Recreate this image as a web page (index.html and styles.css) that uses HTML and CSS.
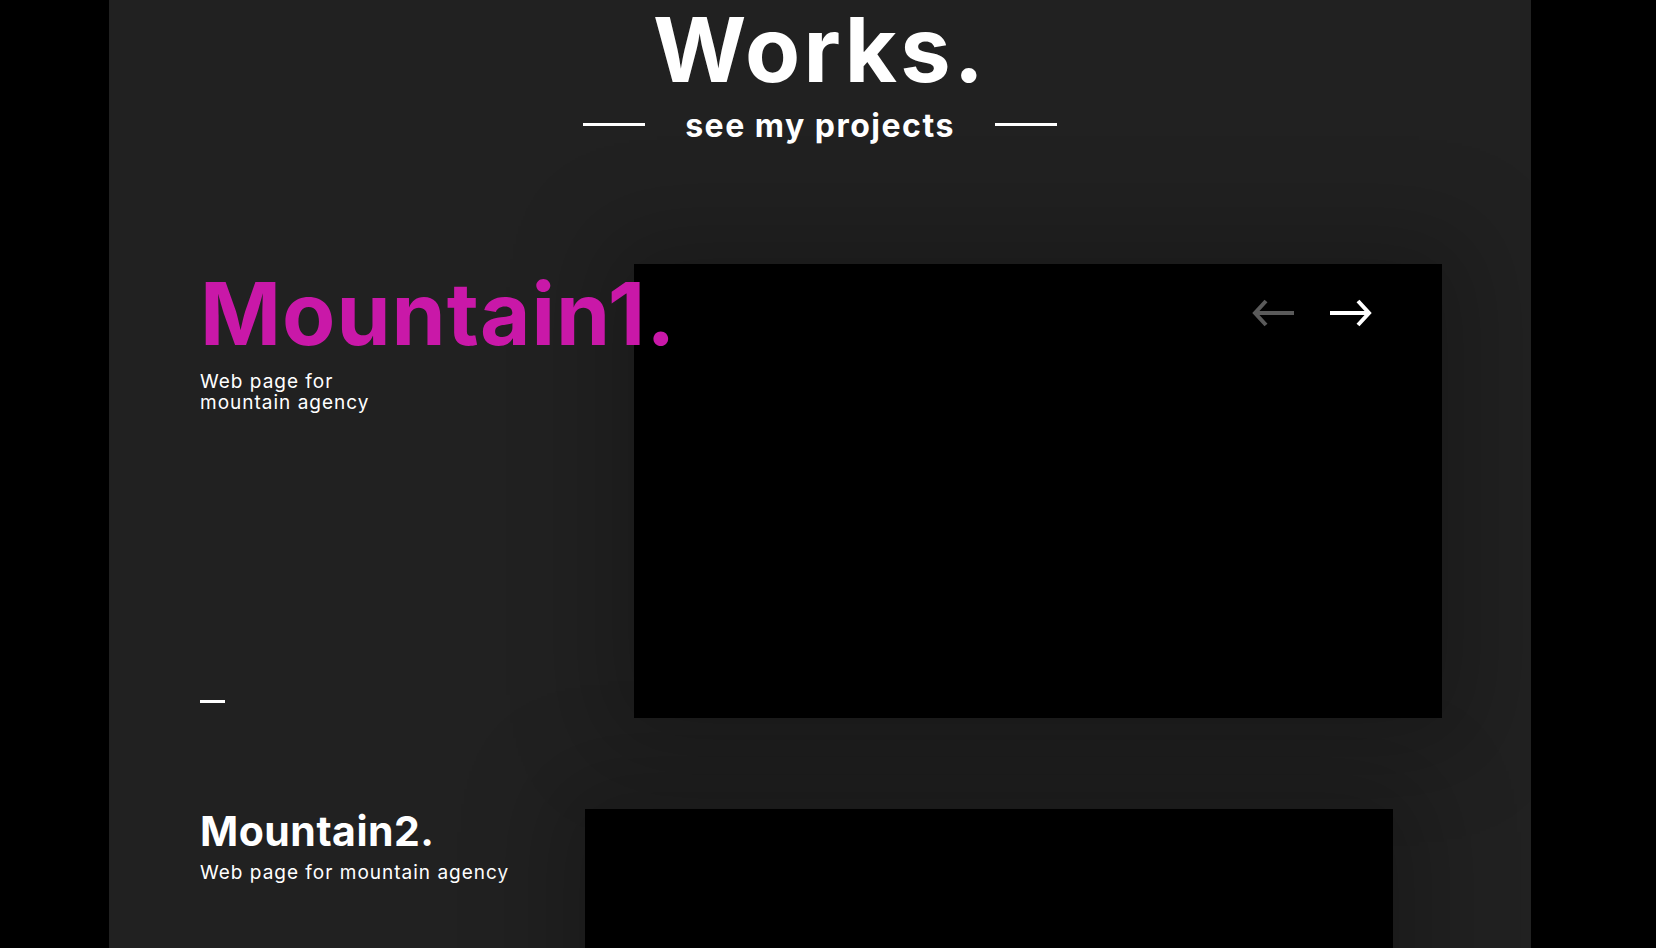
FILE: index.html
```html
<!DOCTYPE html>
<html>
<head>
<meta charset="utf-8">
<link rel="stylesheet" href="styles.css">
</head>
<body>
<main class="page">
  <header class="works-head">
    <h1 class="works-title">Works.</h1>
    <div class="works-sub">
      <span class="rule"></span>
      <span class="sub-text">see my projects</span>
      <span class="rule"></span>
    </div>
  </header>

  <section class="project project-one">
    <div class="project-info">
      <div>
        <h2 class="project-title accent">Mountain1.</h2>
        <p class="project-desc">Web page for<br>mountain agency</p>
      </div>
      <span class="dash"></span>
    </div>
    <div class="project-shot">
      <div class="arrows">
        <svg class="arrow arrow-prev" width="44" height="28" viewBox="0 0 44 28"><path d="M42 14H3M14 2L3 14l11 12" fill="none" stroke="currentColor" stroke-width="4" stroke-linecap="butt" stroke-linejoin="miter"/></svg>
        <svg class="arrow arrow-next" width="44" height="28" viewBox="0 0 44 28"><path d="M2 14h39M30 2l11 12-11 12" fill="none" stroke="currentColor" stroke-width="4" stroke-linecap="butt" stroke-linejoin="miter"/></svg>
      </div>
    </div>
  </section>

  <section class="project project-two">
    <div class="project-info-two">
      <h2 class="project-title-small">Mountain2.</h2>
      <p class="project-desc desc-two">Web page for mountain agency</p>
    </div>
    <div class="project-shot shot-two"></div>
  </section>
</main>
</body>
</html>
```
FILE: styles.css
```css
html, body {
  margin: 0;
  padding: 0;
  background: #000;
  height: 100%;
  overflow: hidden;
}
body {
  font-family: Inter, "Liberation Sans", sans-serif;
  color: #fff;
}
.page {
  width: 1422px;
  margin-left: 109px;
  min-height: 948px;
  background: #212121;
  box-sizing: border-box;
  padding-top: 1px;
}
.works-head {
  display: flex;
  flex-direction: column;
  align-items: center;
}
.works-title {
  margin: 4px 0 0 0;
  font-size: 90px;
  line-height: 90px;
  font-weight: 700;
  letter-spacing: 3.2px;
}
.works-sub {
  display: flex;
  align-items: center;
  gap: 40px;
  margin-top: 7px;
}
.rule {
  width: 62px;
  height: 3px;
  background: #fff;
}
.sub-text {
  font-size: 32px;
  font-weight: 700;
  letter-spacing: 1.5px;
  line-height: 40px;
  margin-top: 4px;
}
.project {
  display: flex;
  position: relative;
}
.project-one {
  margin-top: 118px;
  padding-left: 91px;
  height: 454px;
}
.project-info {
  width: 434px;
  display: flex;
  flex-direction: column;
  justify-content: space-between;
  position: relative;
  z-index: 2;
  padding-bottom: 15px;
}
.project-title {
  margin: 0;
  font-size: 87px;
  line-height: 100px;
  font-weight: 700;
  letter-spacing: 1px;
  white-space: nowrap;
}
.accent {
  color: #c918a8;
}
.project-desc {
  margin: 7px 0 0 0;
  font-size: 19px;
  line-height: 21px;
  font-weight: 400;
  letter-spacing: 1px;
}
.dash {
  display: block;
  width: 25px;
  height: 3px;
  background: #fff;
}
.project-shot {
  width: 808px;
  height: 454px;
  background: #000;
  box-shadow: 0 0 90px 30px rgba(0, 0, 0, 0.22);
  position: relative;
  z-index: 1;
}
.arrows {
  position: absolute;
  top: 35px;
  right: 70px;
  display: flex;
  gap: 32px;
}
.arrow-prev { color: #5a5a5a; }
.arrow-next { color: #fff; }
.project-two {
  margin-top: 91px;
  padding-left: 91px;
}
.project-info-two {
  width: 385px;
}
.project-title-small {
  margin: -3px 0 0 0;
  font-size: 41px;
  line-height: 50px;
  font-weight: 700;
  letter-spacing: 0.5px;
}
.desc-two {
  margin-top: 6px;
}
.shot-two {
  height: 300px;
}
```
